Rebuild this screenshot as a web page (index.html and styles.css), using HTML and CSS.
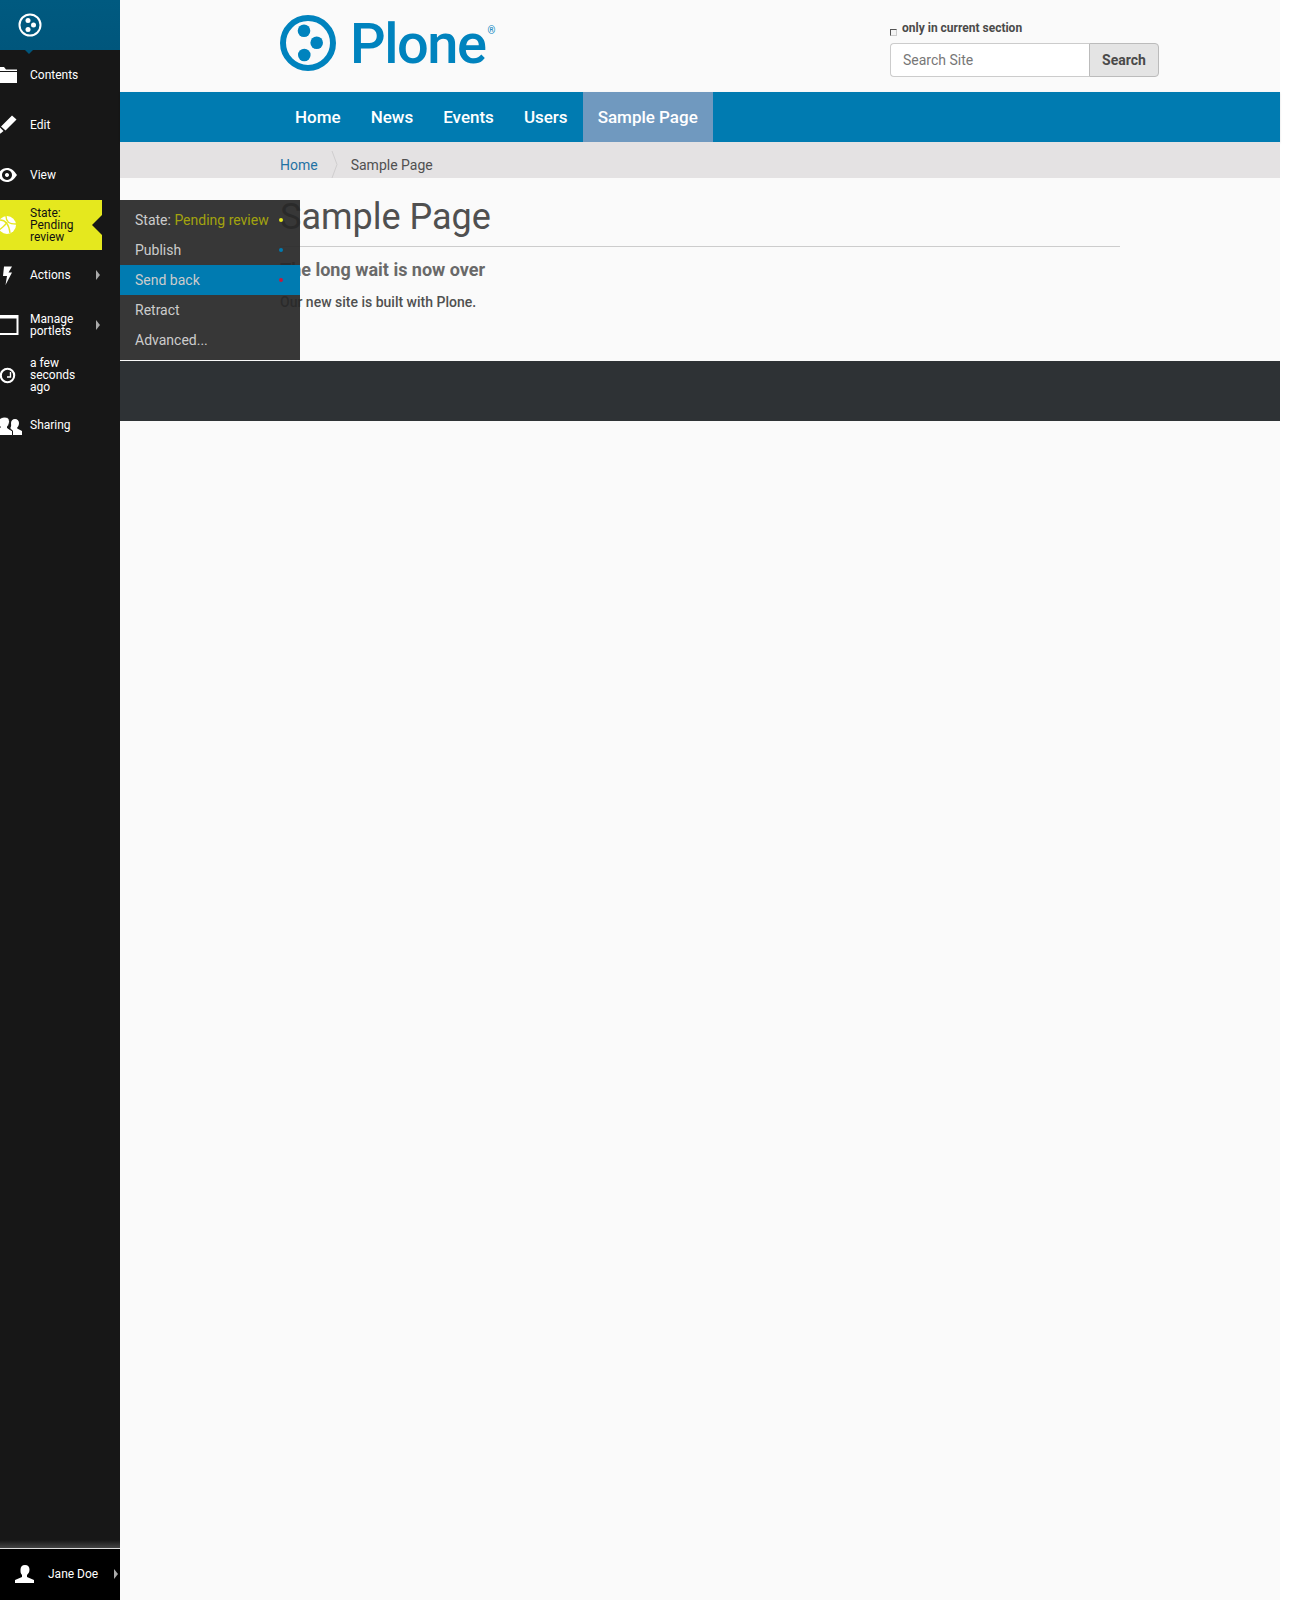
FILE: index.html
```html
<!DOCTYPE html>
<html lang="en">
<head>
    <meta charset="UTF-8">
    <title>Sample Page</title>
    <link rel="stylesheet" href="styles.css">
</head>
<body>
<div class="page">

    <nav class="toolbar">
        <div class="toolbar-logo">
            <svg width="24" height="24" viewBox="0 0 24 24">
                <circle cx="12" cy="12" r="10.5" fill="none" stroke="#fff" stroke-width="2"/>
                <circle cx="10" cy="7.500" r="2.500" fill="#fff"/>
                <circle cx="15.500" cy="12" r="2.500" fill="#fff"/>
                <circle cx="10" cy="16.500" r="2.500" fill="#fff"/>
            </svg>
        </div>

        <a class="toolbar-item">
            <svg class="toolbar-icon" viewBox="0 0 20 20"><path d="M0 2h7l2 2.500h11v1.500H0zM0 7h20v11H0z" fill="#fff"/></svg>
            <span>Contents</span>
        </a>
        <a class="toolbar-item">
            <svg class="toolbar-icon" viewBox="0 0 20 20"><path d="M15 .5l4.500 4L8.500 15.500l-4.500-4zM3 12.500l3.500 3.500-3 2.500H2l-1.500-1.500v-1.500z" fill="#fff"/></svg>
            <span>Edit</span>
        </a>
        <a class="toolbar-item">
            <svg class="toolbar-icon" viewBox="0 0 20 20"><path fill-rule="evenodd" d="M0 10C3 5.500 6 3 10 3s7 2.500 10 7c-3 4.500-6 7-10 7s-7-2.500-10-7zM10 5a5 5 0 1 0 .01 0zM10 8a2 2 0 1 1-.01 0z" fill="#fff"/></svg>
            <span>View</span>
        </a>
        <a class="toolbar-item toolbar-state">
            <svg class="toolbar-icon" viewBox="0 0 20 20">
                <circle cx="10" cy="10" r="9" fill="#fff"/>
                <path d="M3 5c6 0 9 5 10 13M9 1c0 6 3 8 10 8M2 15c4-3 7-5 8-8" fill="none" stroke="#e5e81e" stroke-width="1.400"/>
            </svg>
            <span>State:<br>Pending<br>review</span>
        </a>
        <a class="toolbar-item has-arrow">
            <svg class="toolbar-icon" viewBox="0 0 20 20"><path d="M7 1.500h8l-3.500 6H15L8.500 20 10 11H6z" fill="#fff"/></svg>
            <span>Actions</span>
        </a>
        <a class="toolbar-item has-arrow">
            <svg class="toolbar-icon" viewBox="0 0 20 20"><path fill-rule="evenodd" d="M-3 0h24.500v20H-3zM-3 3.500V18h22.500V3.500z" fill="#fff"/></svg>
            <span>Manage<br>portlets</span>
        </a>
        <a class="toolbar-item">
            <svg class="toolbar-icon" viewBox="0 0 20 20">
                <circle cx="10.500" cy="10.500" r="6.700" fill="none" stroke="#fff" stroke-width="2.100"/>
                <path d="M13.500 7v5H10" fill="none" stroke="#fff" stroke-width="1.400"/>
            </svg>
            <span>a few<br>seconds<br>ago</span>
        </a>
        <a class="toolbar-item">
            <svg class="toolbar-icon" viewBox="0 0 20 20">
                <path d="M18 4c2.500 0 4 2 4 4 0 2-.8 3.500-1.800 4.500v1L25 16v4h-9v-4l-2.500-2.500v-1C14.500 11.500 14 9.500 14 8c0-2 1.500-4 4-4z" fill="#fff"/>
                <path d="M8 2c3 0 4.500 2 4.500 4.500 0 2-.8 3.800-2 5V13l5 3v4.500H-2V16l5-3v-1.500c-1-1-2-3-2-5C1 4 5 2 8 2z" fill="#fff" stroke="#171717"/>
            </svg>
            <span>Sharing</span>
        </a>

        <div class="toolbar-fade"></div>
        <a class="toolbar-user">
            <svg width="20" height="18" viewBox="0 0 20 18"><path d="M10 0c3 0 4.500 2 4.500 4.500 0 2.500-1 4-2.500 5.500v2l7 3v3H0v-3l7-3v-2C5.500 8.500 5.500 7 5.500 4.500 5.500 2 7 0 10 0z" fill="#fff"/></svg>
            <span>Jane Doe</span>
        </a>
    </nav>

    <div class="main">
        <header class="site-header">
            <a class="logo">
                <svg width="56" height="56" viewBox="0 0 56 56">
                    <circle cx="28" cy="28" r="25" fill="none" stroke="#0083be" stroke-width="6"/>
                    <circle cx="24" cy="15.700" r="6.300" fill="#0083be"/>
                    <circle cx="36.700" cy="27.700" r="6.300" fill="#0083be"/>
                    <circle cx="24.300" cy="40" r="6.300" fill="#0083be"/>
                </svg>
                <span class="logo-text">Plone</span><span class="logo-reg">®</span>
            </a>
            <form class="search">
                <label class="search-section"><span class="search-check"></span>only in current section</label>
                <div class="search-row">
                    <input class="search-input" type="text" placeholder="Search Site">
                    <button class="search-button" type="button">Search</button>
                </div>
            </form>
        </header>

        <ul class="main-nav">
            <li><a>Home</a></li>
            <li><a>News</a></li>
            <li><a>Events</a></li>
            <li><a>Users</a></li>
            <li class="selected"><a>Sample Page</a></li>
        </ul>

        <div class="breadcrumbs">
            <a>Home</a>
            <svg class="crumb-sep" width="8" height="27" viewBox="0 0 8 27"><path d="M1 0l5 13.500L1 27" fill="none" stroke="#cfcdce"/></svg>
            <span>Sample Page</span>
        </div>

        <article class="content">
            <h1>Sample Page</h1>
            <h2>The long wait is now over</h2>
            <p>Our new site is built with Plone.</p>
        </article>

        <footer class="site-footer"></footer>
    </div>

    <ul class="state-menu">
        <li><span>State: <em>Pending review</em></span><i class="dot dot-yellow"></i></li>
        <li><span>Publish</span><i class="dot dot-blue"></i></li>
        <li class="active"><span>Send back</span><i class="dot dot-red"></i></li>
        <li><span>Retract</span></li>
        <li><span>Advanced...</span></li>
    </ul>

</div>
</body>
</html>
```

FILE: styles.css
```css
*
{
    box-sizing: border-box;
    padding: 0;
    margin: 0;
}

html, body
{
    background: #fff;
}

body
{
    font-family: Roboto, Arial, sans-serif;
    color: #505050;
}

ul
{
    list-style: none;
}

.page
{
    position: relative;
    display: flex;
    width: 1280px;
    height: 1600px;
    background: #fafafa;
}

/* left toolbar */
.toolbar
{
    display: flex;
    flex-direction: column;
    flex: none;
    width: 120px;
    overflow: hidden;
    background: #171717;
    color: #fff;
    font-size: 12px;
}

.toolbar-logo
{
    position: relative;
    display: flex;
    flex: none;
    align-items: center;
    height: 50px;
    padding-left: 18px;
    background: linear-gradient(#005a80, #00567c);
}

.toolbar-logo::after
{
    content: "";
    position: absolute;
    top: 50px;
    left: 25px;
    border: 4px solid transparent;
    border-bottom: 0;
    border-top-color: #00567c;
}

.toolbar-item
{
    position: relative;
    display: flex;
    flex: none;
    align-items: center;
    gap: 13px;
    height: 50px;
    margin-left: -3px;
    line-height: 12px;
}

.toolbar-icon
{
    flex: none;
    width: 20px;
    height: 20px;
    overflow: visible;
}

.toolbar-state
{
    width: 105px;
    background: #e5e81e;
    color: #111;
}

.toolbar-state::after
{
    content: "";
    position: absolute;
    top: 15px;
    right: 0;
    border: 10px solid transparent;
    border-left: 0;
    border-right-color: #171717;
}

.has-arrow::after
{
    content: "";
    position: absolute;
    top: 20px;
    left: 99px;
    border: 5px solid transparent;
    border-right: 0;
    border-left: 4px solid #aaa;
}

.toolbar-fade
{
    flex: none;
    height: 8px;
    margin-top: auto;
    background: linear-gradient(#171717, #444);
}

.toolbar-user
{
    position: relative;
    display: flex;
    flex: none;
    align-items: center;
    gap: 13px;
    height: 52px;
    padding: 0 0 2px 15px;
    border-top: 1px solid #ddd;
    background: #000;
}

.toolbar-user::after
{
    content: "";
    position: absolute;
    top: 20px;
    left: 114px;
    border: 5px solid transparent;
    border-right: 0;
    border-left: 4px solid #aaa;
}

/* header */
.main
{
    flex: 1;
    min-width: 0;
}

.site-header
{
    display: flex;
    justify-content: space-between;
    height: 92px;
    padding: 15px 121px 0 160px;
}

.logo
{
    display: flex;
    align-items: flex-start;
}

.logo-text
{
    margin: -4px 0 0 14px;
    color: #0083be;
    font-size: 56px;
    font-weight: 500;
    letter-spacing: -1.5px;
    line-height: 66px;
}

.logo-reg
{
    margin: 10px 0 0 2px;
    color: #0083be;
    font-size: 10px;
}

.search
{
    width: 269px;
    padding-top: 6px;
}

.search-section
{
    display: flex;
    align-items: flex-start;
    height: 22px;
    color: #4a4a4a;
    font-size: 12px;
    font-weight: 700;
}

.search-check
{
    width: 7px;
    height: 7px;
    margin: 8px 5px 0 0;
    border: 1px solid #ccc;
    border-top-color: #555;
    border-left-color: #555;
    background: #f4f4f4;
}

.search-row
{
    display: flex;
}

.search-input
{
    flex: 1;
    min-width: 0;
    height: 34px;
    padding: 0 12px;
    border: 1px solid #ccc;
    border-right: 0;
    border-radius: 4px 0 0 4px;
    background: #fff;
    font-family: Roboto, Arial, sans-serif;
    font-size: 14px;
    outline: none;
}

.search-input::placeholder
{
    color: #777;
}

.search-button
{
    width: 70px;
    height: 34px;
    border: 1px solid #bbb;
    border-radius: 0 4px 4px 0;
    background: #e4e4e4;
    color: #4a4a4a;
    font-family: Roboto, Arial, sans-serif;
    font-size: 14px;
    font-weight: 700;
}

/* navigation */
.main-nav
{
    display: flex;
    height: 50px;
    padding-left: 160px;
    background: #007bb1;
    box-shadow: 0 1px 2px rgba(0,0,0,0.15);
}

.main-nav a
{
    display: block;
    padding: 0 15px;
    color: #fff;
    font-size: 17px;
    font-weight: 500;
    line-height: 50px;
}

.main-nav .selected
{
    background: #7099bf;
}

.breadcrumbs
{
    display: flex;
    align-items: center;
    height: 36px;
    padding: 9px 0 0 160px;
    background: #e4e2e3;
    font-size: 14px;
}

.breadcrumbs a
{
    color: #1f72a3;
}

.crumb-sep
{
    margin: 0 12px 0 13px;
}

/* content */
.content
{
    height: 183px;
    padding: 18px 0 0 160px;
}

.content h1
{
    width: 840px;
    height: 51px;
    border-bottom: 1px solid #ccc;
    font-size: 36px;
    font-weight: 400;
    line-height: 42px;
}

.content h2
{
    margin-top: 12px;
    color: #696969;
    font-size: 18px;
    font-weight: 700;
    line-height: 21px;
}

.content p
{
    margin-top: 12px;
    font-size: 14px;
    font-weight: 500;
    line-height: 20px;
}

.site-footer
{
    height: 60px;
    background: #2e3235;
}

/* state dropdown */
.state-menu
{
    position: absolute;
    top: 200px;
    left: 120px;
    width: 180px;
    height: 160px;
    padding-top: 5px;
    background: rgba(40,40,40,0.93);
    color: #ccc;
    font-size: 14px;
}

.state-menu li
{
    position: relative;
    height: 30px;
    padding-left: 15px;
    line-height: 30px;
}

.state-menu em
{
    color: #a3a30e;
    font-style: normal;
}

.state-menu .active
{
    background: #007bb1;
}

.dot
{
    position: absolute;
    top: 13px;
    left: 159px;
    width: 4px;
    height: 4px;
    border-radius: 50%;
}

.dot-yellow
{
    background: #e5e81e;
}

.dot-blue
{
    background: #007bb1;
}

.dot-red
{
    background: #c4183c;
}
```
